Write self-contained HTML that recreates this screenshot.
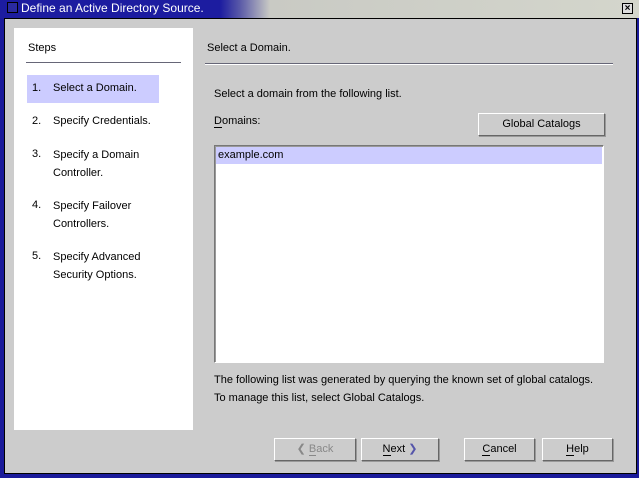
<!DOCTYPE html>
<html><head><style>
*{margin:0;padding:0;box-sizing:border-box}
body{width:639px;height:478px;overflow:hidden;background:#1a1a9a;font-family:"Liberation Sans",sans-serif;font-size:11px;color:#000;position:relative}
.a{position:absolute;white-space:nowrap}
.btn{position:absolute;height:23px;background:#ccc;border:1px solid;border-color:#fff #666 #666 #fff;box-shadow:1px 1px 0 #999;text-align:center;line-height:21px}
u{text-decoration:none;border-bottom:1px solid #000}
</style></head><body>
<div class="a" style="left:0;top:0;width:639px;height:18px;background:linear-gradient(90deg,#1c1ca0 0,#1c1ca0 220px,#5a5aa8 240px,#c9cac4 270px,#d4d6cc 639px)"></div>
<div class="a" style="left:7px;top:2px;width:11px;height:11px;border:1px solid #000;background:#2a2aa0"></div>
<div class="a" style="left:21px;top:1px;color:#fff;font-size:12px">Define an Active Directory Source.</div>
<div class="a" style="left:622px;top:3px;width:11px;height:11px;border:1px solid #000;background:#ddd;font-size:10px;line-height:9px;text-align:center;font-weight:bold">×</div>
<div class="a" style="left:4px;top:18px;width:633px;height:456px;border:1px solid #000;background:#ccc"></div>
<div class="a" style="left:14px;top:28px;width:179px;height:402px;background:#fff"></div>
<div class="a" style="left:28px;top:42px">Steps</div>
<div class="a" style="left:26px;top:62px;width:155px;height:1px;background:#667"></div>
<div class="a" style="left:27px;top:75px;width:132px;height:28px;background:#ccccff"></div>
<div class="a" style="left:32px;top:82px">1.</div><div class="a" style="left:53px;top:82px">Select a Domain.</div>
<div class="a" style="left:32px;top:115px">2.</div><div class="a" style="left:53px;top:115px">Specify Credentials.</div>
<div class="a" style="left:32px;top:148px">3.</div><div class="a" style="left:53px;top:146px;line-height:18px">Specify a Domain<br>Controller.</div>
<div class="a" style="left:32px;top:199px">4.</div><div class="a" style="left:53px;top:197px;line-height:18px">Specify Failover<br>Controllers.</div>
<div class="a" style="left:32px;top:250px">5.</div><div class="a" style="left:53px;top:248px;line-height:18px">Specify Advanced<br>Security Options.</div>
<div class="a" style="left:207px;top:42px">Select a Domain.</div>
<div class="a" style="left:205px;top:63px;width:408px;height:1px;background:#667"></div>
<div class="a" style="left:205px;top:64px;width:408px;height:1px;background:#fff"></div>
<div class="a" style="left:214px;top:88px">Select a domain from the following list.</div>
<div class="a" style="left:214px;top:115px"><u>D</u>omains:</div>
<div class="btn" style="left:478px;top:113px;width:127px">Global Catalogs</div>
<div class="a" style="left:214px;top:145px;width:390px;height:218px;background:#fff;border:1px solid;border-color:#777 #fff #fff #777;box-shadow:inset 1px 1px 0 #999"></div>
<div class="a" style="left:216px;top:147px;width:386px;height:17px;background:#ccccff"></div>
<div class="a" style="left:218px;top:149px">example.com</div>
<div class="a" style="left:214px;top:374px">The following list was generated by querying the known set of global catalogs.</div>
<div class="a" style="left:214px;top:392px">To manage this list, select Global Catalogs.</div>
<div class="btn" style="left:274px;top:438px;width:82px;color:#888">❮ <u style="border-color:#888">B</u>ack</div>
<div class="btn" style="left:361px;top:438px;width:78px"><u>N</u>ext <span style="color:#55a">❯</span></div>
<div class="btn" style="left:464px;top:438px;width:71px"><u>C</u>ancel</div>
<div class="btn" style="left:542px;top:438px;width:71px"><u>H</u>elp</div>
</body></html>
